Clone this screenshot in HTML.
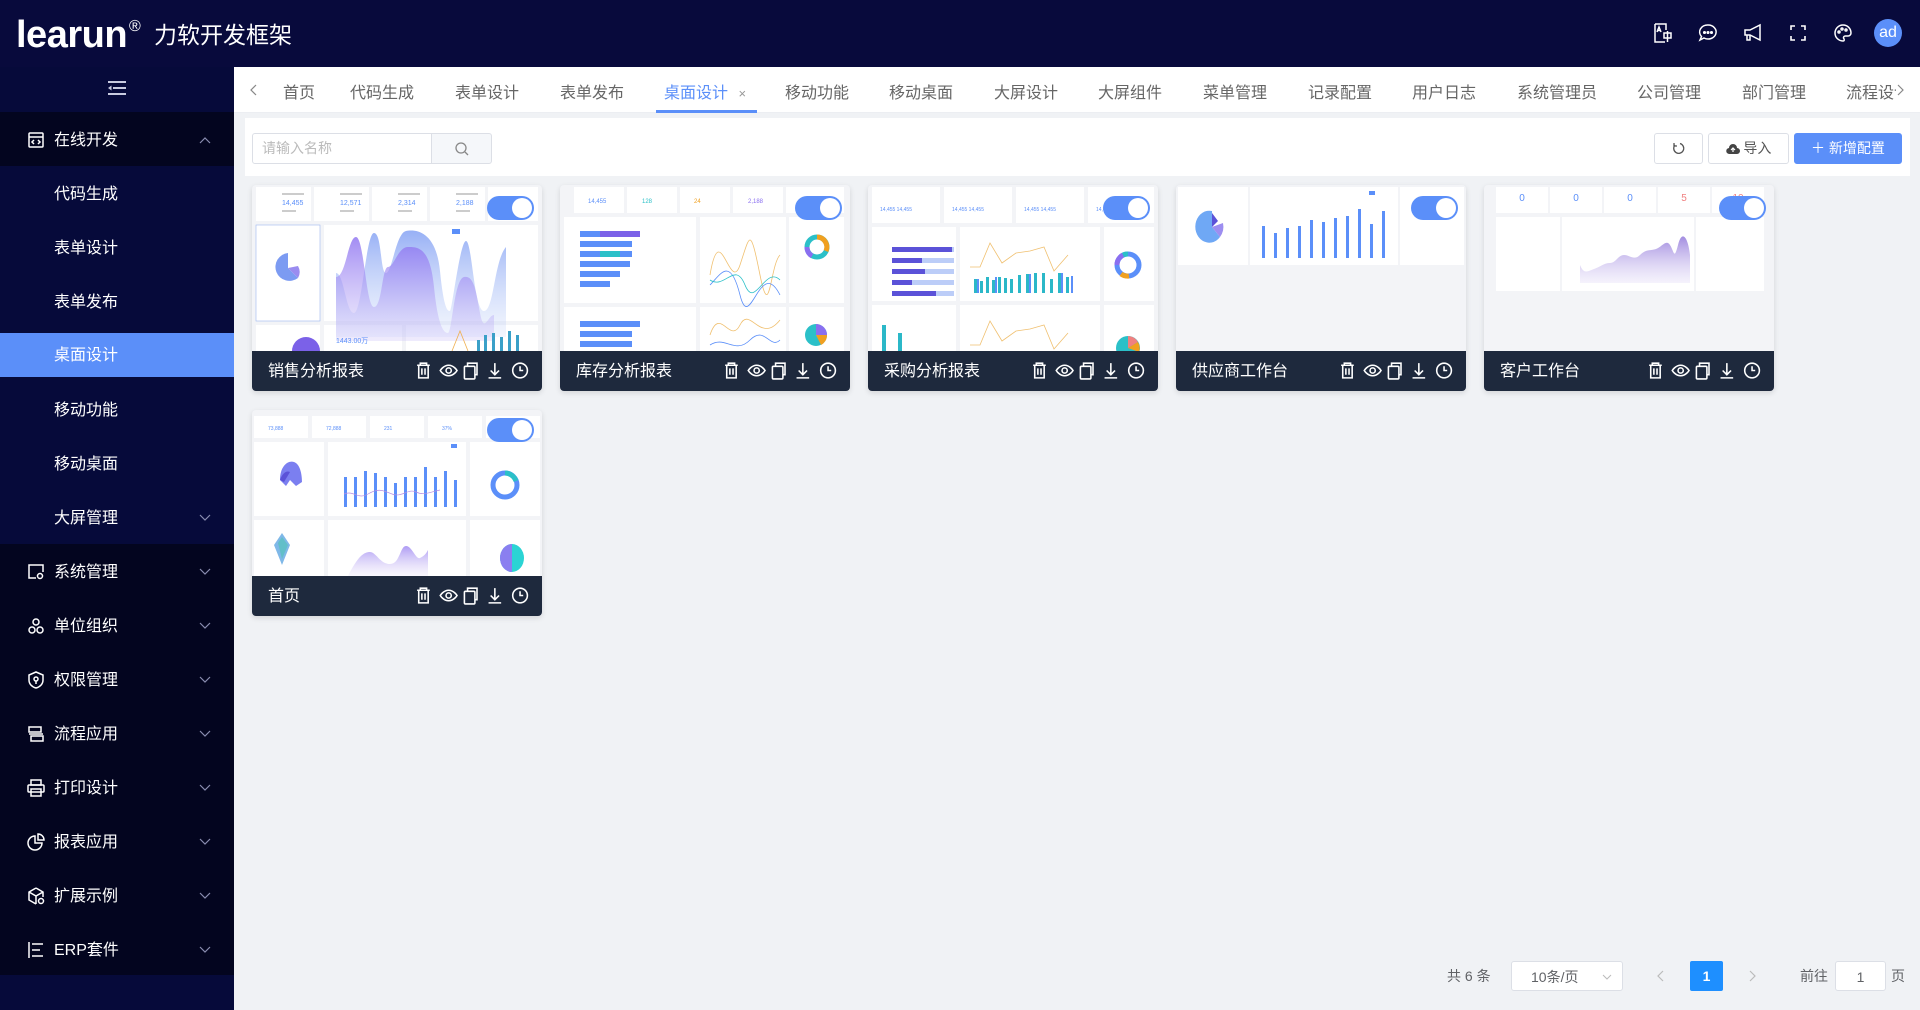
<!DOCTYPE html>
<html><head><meta charset="utf-8">
<style>
*{box-sizing:border-box;margin:0;padding:0}
body{width:1920px;height:1010px;overflow:hidden;background:#f0f2f5;font-family:"Liberation Sans","Noto Sans CJK SC",sans-serif;position:relative}
.hdr{position:absolute;left:0;top:0;width:1920px;height:67px;background:#080a3c}
.logo{position:absolute;left:16px;top:14px;color:#fff;font-weight:bold;font-size:38px;letter-spacing:-0.5px}
.logo sup{font-size:16px;font-weight:normal;vertical-align:top;position:relative;top:4px;margin-left:2px}
.logo2{position:absolute;left:154px;top:16px;color:#fff;font-size:23px}
.hi{position:absolute;top:22px;width:22px;height:22px}
.av{position:absolute;left:1874px;top:19px;width:28px;height:28px;border-radius:50%;background:#5b8ff9;color:#fff;font-size:16px;text-align:center;line-height:28px}
.side{position:absolute;left:0;top:67px;width:234px;height:943px;background:#060a3a}
.ham{position:absolute;left:108px;top:14px}
.m{position:absolute;left:0;width:234px;height:54px;color:#fff;font-size:16px;line-height:58px}
.m.p{background:#03051f;padding-left:54px}
.m.s{padding-left:54px}
.m .ic{position:absolute;left:27px;top:19px;width:18px;height:18px}
.m .ch{position:absolute;left:199px;top:24px}
.act{background:linear-gradient(#060a3a 0,#060a3a 5px,#5b8ff9 5px,#5b8ff9 49px,#060a3a 49px)}
.tabs{position:absolute;left:234px;top:67px;width:1686px;height:46px;background:#fff;border-bottom:1px solid #eceef2}
.tab{position:absolute;top:12px;font-size:16px;color:#666;white-space:nowrap}
.panel{position:absolute;left:245px;top:118px;width:1665px;height:58px;background:#fff}
.inp{position:absolute;left:252px;top:133px;width:180px;height:31px;border:1px solid #dcdfe6;border-radius:3px 0 0 3px;color:#bbb;font-size:14px;line-height:29px;padding-left:9px;background:#fff}
.sbtn{position:absolute;left:431px;top:133px;width:61px;height:31px;border:1px solid #dcdfe6;border-radius:0 3px 3px 0;background:#f5f7fa}
.btn{position:absolute;top:133px;height:31px;border:1px solid #dcdfe6;border-radius:3px;background:#fff;font-size:14px;color:#555;text-align:center;line-height:29px}
.card{position:absolute;width:290px;height:206px;border-radius:4px;overflow:hidden;background:#f3f4f7;box-shadow:0 2px 6px rgba(0,0,0,.12)}
.card svg.pv{position:absolute;left:0;top:0}
.ft{position:absolute;left:0;top:166px;width:290px;height:40px;background:#1e293d;color:#fff;font-size:16px;line-height:42px;padding-left:16px}
.ft .icons{position:absolute;left:162px;top:10px;width:126px;height:19px}
.tg{position:absolute;left:235px;top:11px;width:47px;height:24px;border-radius:12px;background:#5b8ff9}
.tg:after{content:"";position:absolute;right:2px;top:2px;width:20px;height:20px;border-radius:50%;background:#fff}
.pg{position:absolute;top:961px;height:30px;font-size:14px;color:#606266;line-height:30px}
</style></head><body>
<div class="hdr">
 <div class="logo">learun<sup>®</sup></div>
 <div class="logo2">力软开发框架</div>
 <svg class="hi" style="left:1652px" viewBox="0 0 22 22" fill="none" stroke="#fff" stroke-width="1.5"><path d="M3 2h11v6M3 2v18h10"/><path d="M5 10l2-5 2 5M5.5 8.5h3"/><rect x="12" y="11" width="7" height="5"/><path d="M15.5 9v11"/></svg>
 <svg class="hi" style="left:1697px" viewBox="0 0 22 22" fill="none" stroke="#fff" stroke-width="1.5"><path d="M11 3a8 7 0 1 1-4 13l-4 2 1.5-3.5A8 7 0 0 1 11 3z"/><circle cx="7.5" cy="10.5" r=".8" fill="#fff"/><circle cx="11" cy="10.5" r=".8" fill="#fff"/><circle cx="14.5" cy="10.5" r=".8" fill="#fff"/></svg>
 <svg class="hi" style="left:1742px" viewBox="0 0 22 22" fill="none" stroke="#fff" stroke-width="1.5"><path d="M3 8h5l10-5v15L8 13H3z"/><path d="M5 13v5h3v-5"/></svg>
 <svg class="hi" style="left:1787px" viewBox="0 0 22 22" fill="none" stroke="#fff" stroke-width="1.6"><path d="M4 8V4h4M14 4h4v4M18 14v4h-4M8 18H4v-4"/></svg>
 <svg class="hi" style="left:1832px" viewBox="0 0 22 22" fill="none" stroke="#fff" stroke-width="1.5"><path d="M11 3a8 8 0 1 0 0 16c1.5 0 1.5-1.5.8-2.5-.8-1 0-2.5 1.5-2.5H16a3 3 0 0 0 3-3c0-4.5-3.6-8-8-8z"/><circle cx="7" cy="10" r="1"/><circle cx="10" cy="7" r="1"/><circle cx="14" cy="8" r="1"/></svg>
 <div class="av">ad</div>
</div>

<div class="side">
 <svg class="ham" width="18" height="14" viewBox="0 0 18 14" fill="#c8cbe0"><rect x="0" y="0" width="18" height="2"/><rect x="5" y="6" width="13" height="2"/><rect x="0" y="12" width="18" height="2"/><path d="M0 7l3.5-2.5v5z"/></svg>
</div>
<div class="m p" style="top:112px"><svg class="ic" viewBox="0 0 18 18" fill="none" stroke="#fff" stroke-width="1.5"><rect x="2" y="2" width="14" height="14" rx="1"/><path d="M2 6h14M7 9l-2 2 2 2M11 9l2 2-2 2"/></svg>在线开发<svg class="ch" width="12" height="8" viewBox="0 0 12 8" fill="none" stroke="#8a8db0" stroke-width="1.2"><path d="M1 7l5-5 5 5"/></svg></div>
<div class="m s" style="top:166px">代码生成</div>
<div class="m s" style="top:220px">表单设计</div>
<div class="m s" style="top:274px">表单发布</div>
<div class="m s act" style="top:328px;line-height:56px">桌面设计</div>
<div class="m s" style="top:382px">移动功能</div>
<div class="m s" style="top:436px">移动桌面</div>
<div class="m s" style="top:490px">大屏管理<svg class="ch" width="12" height="8" viewBox="0 0 12 8" fill="none" stroke="#8a8db0" stroke-width="1.2"><path d="M1 1l5 5 5-5"/></svg></div>
<div class="m p" style="top:544px"><svg class="ic" viewBox="0 0 18 18" fill="none" stroke="#fff" stroke-width="1.5"><path d="M9 15H2V2h14v7"/><circle cx="13" cy="13" r="2.5"/></svg>系统管理<svg class="ch" width="12" height="8" viewBox="0 0 12 8" fill="none" stroke="#8a8db0" stroke-width="1.2"><path d="M1 1l5 5 5-5"/></svg></div>
<div class="m p" style="top:598px"><svg class="ic" viewBox="0 0 18 18" fill="none" stroke="#fff" stroke-width="1.5"><circle cx="9" cy="5" r="3"/><circle cx="5" cy="13" r="3"/><circle cx="13" cy="13" r="3"/></svg>单位组织<svg class="ch" width="12" height="8" viewBox="0 0 12 8" fill="none" stroke="#8a8db0" stroke-width="1.2"><path d="M1 1l5 5 5-5"/></svg></div>
<div class="m p" style="top:652px"><svg class="ic" viewBox="0 0 18 18" fill="none" stroke="#fff" stroke-width="1.5"><path d="M9 1l7 3v5c0 4-3 7-7 8-4-1-7-4-7-8V4z"/><circle cx="9" cy="8" r="2"/><path d="M9 10v3"/></svg>权限管理<svg class="ch" width="12" height="8" viewBox="0 0 12 8" fill="none" stroke="#8a8db0" stroke-width="1.2"><path d="M1 1l5 5 5-5"/></svg></div>
<div class="m p" style="top:706px"><svg class="ic" viewBox="0 0 18 18" fill="none" stroke="#fff" stroke-width="1.5"><rect x="2" y="2" width="12" height="5"/><rect x="4" y="11" width="12" height="5"/><path d="M2 9h14"/></svg>流程应用<svg class="ch" width="12" height="8" viewBox="0 0 12 8" fill="none" stroke="#8a8db0" stroke-width="1.2"><path d="M1 1l5 5 5-5"/></svg></div>
<div class="m p" style="top:760px"><svg class="ic" viewBox="0 0 18 18" fill="none" stroke="#fff" stroke-width="1.5"><rect x="4" y="1" width="10" height="5"/><rect x="1" y="6" width="16" height="7" rx="1"/><rect x="4" y="10" width="10" height="7"/></svg>打印设计<svg class="ch" width="12" height="8" viewBox="0 0 12 8" fill="none" stroke="#8a8db0" stroke-width="1.2"><path d="M1 1l5 5 5-5"/></svg></div>
<div class="m p" style="top:814px"><svg class="ic" viewBox="0 0 18 18" fill="none" stroke="#fff" stroke-width="1.5"><path d="M8 3a7 7 0 1 0 7 7H8z"/><path d="M11 1a6 6 0 0 1 6 6h-6z"/></svg>报表应用<svg class="ch" width="12" height="8" viewBox="0 0 12 8" fill="none" stroke="#8a8db0" stroke-width="1.2"><path d="M1 1l5 5 5-5"/></svg></div>
<div class="m p" style="top:868px"><svg class="ic" viewBox="0 0 18 18" fill="none" stroke="#fff" stroke-width="1.5"><path d="M9 1l7 4v5M9 1L2 5v8l7 4M2 5l7 4 7-4M9 9v8"/><circle cx="14" cy="14" r="2.5"/></svg>扩展示例<svg class="ch" width="12" height="8" viewBox="0 0 12 8" fill="none" stroke="#8a8db0" stroke-width="1.2"><path d="M1 1l5 5 5-5"/></svg></div>
<div class="m p" style="top:922px;height:53px"><svg class="ic" viewBox="0 0 18 18" fill="none" stroke="#fff" stroke-width="1.5"><path d="M2 1v16M5 3h11M5 9h8M5 15h11"/></svg>ERP套件<svg class="ch" width="12" height="8" viewBox="0 0 12 8" fill="none" stroke="#8a8db0" stroke-width="1.2"><path d="M1 1l5 5 5-5"/></svg></div>

<div class="tabs">
 <svg style="position:absolute;left:16px;top:17px" width="8" height="12" viewBox="0 0 8 12" fill="none" stroke="#888" stroke-width="1.2"><path d="M6 1L1 6l5 5"/></svg>
 <span class="tab" style="left:49px">首页</span>
 <span class="tab" style="left:116px">代码生成</span>
 <span class="tab" style="left:221px">表单设计</span>
 <span class="tab" style="left:326px">表单发布</span>
 <span class="tab" style="left:430px;color:#5b8ff9">桌面设计 <span style="font-size:13px;color:#999;margin-left:6px">×</span></span>
 <div style="position:absolute;left:422px;top:43px;width:101px;height:3px;background:#5b8ff9"></div>
 <span class="tab" style="left:551px">移动功能</span>
 <span class="tab" style="left:655px">移动桌面</span>
 <span class="tab" style="left:760px">大屏设计</span>
 <span class="tab" style="left:864px">大屏组件</span>
 <span class="tab" style="left:969px">菜单管理</span>
 <span class="tab" style="left:1074px">记录配置</span>
 <span class="tab" style="left:1178px">用户日志</span>
 <span class="tab" style="left:1283px">系统管理员</span>
 <span class="tab" style="left:1403px">公司管理</span>
 <span class="tab" style="left:1508px">部门管理</span>
 <span class="tab" style="left:1612px;width:50px;overflow:hidden">流程设计</span>
 <svg style="position:absolute;left:1662px;top:17px" width="8" height="12" viewBox="0 0 8 12" fill="none" stroke="#888" stroke-width="1.2"><path d="M2 1l5 5-5 5"/></svg>
</div>

<div class="panel"></div>
<div class="inp">请输入名称</div>
<div class="sbtn"><svg style="position:absolute;left:23px;top:8px" width="14" height="14" viewBox="0 0 14 14" fill="none" stroke="#888" stroke-width="1.3"><circle cx="6" cy="6" r="5"/><path d="M10 10l3 3"/></svg></div>
<div class="btn" style="left:1654px;width:49px"><svg style="margin-top:8px" width="13" height="13" viewBox="0 0 13 13" fill="none" stroke="#555" stroke-width="1.3"><path d="M3 3a5 5 0 1 0 5-1.5"/><path d="M2 1v3h3"/></svg></div>
<div class="btn" style="left:1708px;width:81px"><svg style="vertical-align:-2px" width="14" height="12" viewBox="0 0 14 12"><path d="M3.5 11a3 3 0 0 1-.5-6 4 4 0 0 1 8 0 3 3 0 0 1 0 6z" fill="#444"/><path d="M7 9V5M5 7l2-2 2 2" stroke="#fff" stroke-width="1.2" fill="none"/></svg> 导入</div>
<div class="btn" style="left:1794px;width:108px;background:#5b8ff9;border-color:#5b8ff9;color:#fff">＋ 新增配置</div>

<!-- Cards -->
<div class="card" style="left:252px;top:185px">
<svg class="pv" width="290" height="166" viewBox="0 0 290 166">
<g fill="#fff"><rect x="4" y="2" width="55" height="34"/><rect x="62" y="2" width="55" height="34"/><rect x="120" y="2" width="55" height="34"/><rect x="178" y="2" width="55" height="34"/><rect x="236" y="2" width="50" height="34"/><rect x="4" y="40" width="64" height="96" stroke="#9db6f0" stroke-width=".6"/><rect x="72" y="40" width="214" height="96"/><rect x="4" y="140" width="64" height="30"/><rect x="72" y="140" width="78" height="30"/><rect x="154" y="140" width="132" height="30"/></g>
<g fill="#5b8ff9" font-size="7" font-family="Liberation Sans"><text x="30" y="20">14,455</text><text x="88" y="20">12,571</text><text x="146" y="20">2,314</text><text x="204" y="20">2,188</text></g>
<g fill="#ccc"><rect x="30" y="8" width="22" height="2"/><rect x="88" y="8" width="22" height="2"/><rect x="146" y="8" width="22" height="2"/><rect x="204" y="8" width="22" height="2"/><rect x="30" y="25" width="14" height="2"/><rect x="88" y="25" width="14" height="2"/><rect x="146" y="25" width="14" height="2"/><rect x="204" y="25" width="14" height="2"/></g>
<path d="M36 68a14 14 0 1 0 10 25l-10-10z" fill="#7c9bf2"/><path d="M36 83l10 10a12 12 0 0 0 0-12z" fill="#9a8cf0"/>
<defs><linearGradient id="g1" x1="0" y1="0" x2="0" y2="1"><stop offset="0" stop-color="#8b6ff0" stop-opacity=".8"/><stop offset="1" stop-color="#c8bdf7" stop-opacity=".3"/></linearGradient><linearGradient id="g2" x1="0" y1="0" x2="0" y2="1"><stop offset="0" stop-color="#7d9cf3" stop-opacity=".8"/><stop offset="1" stop-color="#bfd0f8" stop-opacity=".2"/></linearGradient></defs>
<path d="M84 88c8 0 10 40 18 40s12-80 20-80 6 40 12 40 10-40 20-42 30 0 34 40 8 40 10 40 10-70 16-70 8 70 18 70 10-50 22-64v90H84z" fill="url(#g2)"/>
<path d="M84 92c10 0 12-40 20-40s10 70 18 70 8-40 14-40 10-20 20-20 22 0 26 40 10 46 14 46 6-54 16-56 12 14 16 36 8 2 14 2v26H84z" fill="url(#g1)"/>
<rect x="200" y="44" width="8" height="5" fill="#5b8ff9"/>
<path d="M40 166a14 14 0 0 1 28 0z" fill="#7b61e8"/>
<text x="84" y="158" font-size="7" fill="#5b8ff9" font-family="Liberation Sans">1443.00万</text>
<g fill="#3aa0c8"><rect x="225" y="155" width="3" height="11"/><rect x="232" y="150" width="3" height="16"/><rect x="240" y="148" width="3" height="18"/><rect x="248" y="152" width="3" height="14"/><rect x="256" y="146" width="3" height="20"/><rect x="264" y="150" width="3" height="16"/></g>
<path d="M200 166l8-20 8 20" stroke="#f0b050" fill="none" stroke-width=".8"/>
</svg>
<div class="tg"></div>
<div class="ft">销售分析报表<svg class="icons" viewBox="0 0 120 18" fill="none" stroke="#fff" stroke-width="1.5"><path d="M3 4h12M6 4V2h6v2M4.5 4v12h9V4M7.5 7v6M10.5 7v6"/><path d="M25 9s3-5 8-5 8 5 8 5-3 5-8 5-8-5-8-5z"/><circle cx="33" cy="9" r="2.5"/><rect x="48" y="5" width="10" height="12" rx="1"/><path d="M51 5V2h9v11h-2"/><path d="M77 2v11M73 9l4 4 4-4M71 16h12"/><circle cx="101" cy="9" r="7"/><path d="M101 5v4h3"/></svg></div>
</div>

<div class="card" style="left:560px;top:185px">
<svg class="pv" width="290" height="166" viewBox="0 0 290 166">
<g fill="#fff"><rect x="14" y="2" width="50" height="26"/><rect x="67" y="2" width="50" height="26"/><rect x="120" y="2" width="50" height="26"/><rect x="173" y="2" width="50" height="26"/><rect x="226" y="2" width="58" height="26"/><rect x="4" y="32" width="132" height="86"/><rect x="140" y="32" width="86" height="86"/><rect x="229" y="32" width="55" height="86"/><rect x="4" y="122" width="132" height="50"/><rect x="140" y="122" width="86" height="50"/><rect x="229" y="122" width="55" height="50"/></g>
<g font-size="6" font-family="Liberation Sans"><text x="28" y="18" fill="#5b8ff9">14,455</text><text x="82" y="18" fill="#2bc0c8">128</text><text x="134" y="18" fill="#f0a020">24</text><text x="188" y="18" fill="#8a6ff0">2,188</text></g>
<g><rect x="20" y="46" width="60" height="6" fill="#5b8ff9"/><rect x="40" y="46" width="40" height="6" fill="#7b61e8"/><rect x="20" y="56" width="52" height="6" fill="#5b8ff9"/><rect x="20" y="66" width="52" height="6" fill="#5b8ff9"/><rect x="40" y="66" width="20" height="6" fill="#2bc0c8"/><rect x="20" y="76" width="50" height="6" fill="#5b8ff9"/><rect x="20" y="86" width="40" height="6" fill="#5b8ff9"/><rect x="20" y="96" width="30" height="6" fill="#5b8ff9"/><rect x="20" y="136" width="60" height="6" fill="#5b8ff9"/><rect x="20" y="146" width="52" height="6" fill="#5b8ff9"/><rect x="20" y="156" width="52" height="6" fill="#5b8ff9"/></g>
<g fill="none" stroke-width=".8"><path d="M150 90c10-60 20 20 30-10s10-40 20 10 10-10 20-20" stroke="#f0c070"/><path d="M150 100c10-10 20-30 30 10s20-40 40 0" stroke="#5b8ff9"/><path d="M150 95c15 10 25-20 35 5s20-20 35-5" stroke="#2bc0c8"/><path d="M150 150c10-30 20 10 30-10s20 20 40-5" stroke="#f0c070"/><path d="M150 160c15-10 25 10 40-5s20 10 30 0" stroke="#5b8ff9"/></g>
<circle cx="257" cy="62" r="10" fill="none" stroke="#2bc0c8" stroke-width="5"/><path d="M257 52a10 10 0 0 1 9 14" stroke="#f0a020" stroke-width="5" fill="none"/><path d="M247 62a10 10 0 0 0 5 9" stroke="#8a6ff0" stroke-width="5" fill="none"/>
<circle cx="256" cy="150" r="11" fill="#2bc0c8"/><path d="M256 150v-11a11 11 0 0 1 11 11z" fill="#8a6ff0"/><path d="M256 150h11a11 11 0 0 1-6 10z" fill="#f0a020"/>
</svg>
<div class="tg"></div>
<div class="ft">库存分析报表<svg class="icons" viewBox="0 0 120 18" fill="none" stroke="#fff" stroke-width="1.5"><path d="M3 4h12M6 4V2h6v2M4.5 4v12h9V4M7.5 7v6M10.5 7v6"/><path d="M25 9s3-5 8-5 8 5 8 5-3 5-8 5-8-5-8-5z"/><circle cx="33" cy="9" r="2.5"/><rect x="48" y="5" width="10" height="12" rx="1"/><path d="M51 5V2h9v11h-2"/><path d="M77 2v11M73 9l4 4 4-4M71 16h12"/><circle cx="101" cy="9" r="7"/><path d="M101 5v4h3"/></svg></div>
</div>

<div class="card" style="left:868px;top:185px">
<svg class="pv" width="290" height="166" viewBox="0 0 290 166">
<g fill="#fff"><rect x="4" y="2" width="68" height="36"/><rect x="76" y="2" width="68" height="36"/><rect x="148" y="2" width="68" height="36"/><rect x="220" y="2" width="66" height="36"/><rect x="4" y="42" width="84" height="74"/><rect x="92" y="42" width="140" height="74"/><rect x="236" y="42" width="50" height="74"/><rect x="4" y="120" width="84" height="50"/><rect x="92" y="120" width="140" height="50"/><rect x="236" y="120" width="50" height="50"/></g>
<g font-size="5" fill="#5b8ff9" font-family="Liberation Sans"><text x="12" y="26">14,455 14,455</text><text x="84" y="26">14,455 14,455</text><text x="156" y="26">14,455 14,455</text><text x="228" y="26">14,455</text></g>
<g fill="#bccdf8"><rect x="24" y="62" width="62" height="5"/><rect x="24" y="73" width="62" height="5"/><rect x="24" y="84" width="62" height="5"/><rect x="24" y="95" width="62" height="5"/><rect x="24" y="106" width="62" height="5"/></g>
<g fill="#5b52d8"><rect x="24" y="62" width="60" height="5"/><rect x="24" y="73" width="30" height="5"/><rect x="24" y="84" width="33" height="5"/><rect x="24" y="95" width="20" height="5"/><rect x="24" y="106" width="44" height="5"/></g>
<g fill="#2bb8c8"><rect x="106" y="94" width="3" height="14"/><rect x="112" y="96" width="3" height="12"/><rect x="118" y="92" width="3" height="16"/><rect x="124" y="95" width="3" height="13"/><rect x="130" y="92" width="3" height="16"/><rect x="136" y="93" width="3" height="15"/><rect x="142" y="94" width="3" height="14"/><rect x="150" y="90" width="3" height="18"/><rect x="158" y="89" width="3" height="19"/><rect x="166" y="88" width="3" height="20"/><rect x="174" y="88" width="3" height="20"/><rect x="182" y="94" width="3" height="14"/><rect x="190" y="88" width="3" height="20"/><rect x="198" y="92" width="3" height="16"/><rect x="14" y="140" width="4" height="30"/><rect x="30" y="148" width="4" height="22"/></g>
<g fill="#5b8ff9"><rect x="109" y="94" width="2" height="14"/><rect x="127" y="92" width="2" height="16"/><rect x="161" y="89" width="2" height="19"/><rect x="193" y="88" width="2" height="20"/><rect x="203" y="91" width="2" height="17"/></g>
<path d="M102 82h10l10-24 12 20 14-10 14-2 14-4 10 24 14-16" fill="none" stroke="#f0c070" stroke-width=".8"/>
<path d="M102 160h10l10-24 12 20 14-10 14-2 14-4 10 24 14-16" fill="none" stroke="#f0c070" stroke-width=".8"/>
<circle cx="260" cy="80" r="11" fill="none" stroke="#5b8ff9" stroke-width="5"/><path d="M249 80a11 11 0 0 1 6-10" stroke="#8a6ff0" stroke-width="5" fill="none"/><path d="M253 89a11 11 0 0 0 8 2" stroke="#f0a020" stroke-width="5" fill="none"/><path d="M255 70a11 11 0 0 1 5-1" stroke="#2bc0c8" stroke-width="5" fill="none"/>
<circle cx="260" cy="163" r="12" fill="#2bc0c8"/><path d="M260 163v-12a12 12 0 0 1 10 6z" fill="#f08080"/><path d="M260 163l10-6a12 12 0 0 1 1 10z" fill="#f0a020"/>
</svg>
<div class="tg"></div>
<div class="ft">采购分析报表<svg class="icons" viewBox="0 0 120 18" fill="none" stroke="#fff" stroke-width="1.5"><path d="M3 4h12M6 4V2h6v2M4.5 4v12h9V4M7.5 7v6M10.5 7v6"/><path d="M25 9s3-5 8-5 8 5 8 5-3 5-8 5-8-5-8-5z"/><circle cx="33" cy="9" r="2.5"/><rect x="48" y="5" width="10" height="12" rx="1"/><path d="M51 5V2h9v11h-2"/><path d="M77 2v11M73 9l4 4 4-4M71 16h12"/><circle cx="101" cy="9" r="7"/><path d="M101 5v4h3"/></svg></div>
</div>

<div class="card" style="left:1176px;top:185px">
<svg class="pv" width="290" height="166" viewBox="0 0 290 166">
<g fill="#fff"><rect x="2" y="2" width="70" height="78"/><rect x="74" y="2" width="148" height="78"/><rect x="224" y="2" width="64" height="78"/></g>
<path d="M36 26a14 16 0 1 0 8 26l-8-10z" fill="#6fa8f5"/><path d="M36 42l8 10a14 16 0 0 0 3-14z" fill="#9d8ef0"/><path d="M36 42v-14l6 8z" fill="#5b52d8"/>
<g fill="#5b8ff9"><rect x="86" y="41" width="3" height="32"/><rect x="98" y="48" width="3" height="25"/><rect x="110" y="43" width="3" height="30"/><rect x="122" y="41" width="3" height="32"/><rect x="134" y="35" width="3" height="38"/><rect x="146" y="37" width="3" height="36"/><rect x="158" y="33" width="3" height="40"/><rect x="170" y="31" width="3" height="42"/><rect x="182" y="24" width="3" height="49"/><rect x="194" y="39" width="3" height="34"/><rect x="206" y="26" width="3" height="47"/></g>
<rect x="193" y="6" width="6" height="4" fill="#5b8ff9"/>
</svg>
<div class="tg"></div>
<div class="ft">供应商工作台<svg class="icons" viewBox="0 0 120 18" fill="none" stroke="#fff" stroke-width="1.5"><path d="M3 4h12M6 4V2h6v2M4.5 4v12h9V4M7.5 7v6M10.5 7v6"/><path d="M25 9s3-5 8-5 8 5 8 5-3 5-8 5-8-5-8-5z"/><circle cx="33" cy="9" r="2.5"/><rect x="48" y="5" width="10" height="12" rx="1"/><path d="M51 5V2h9v11h-2"/><path d="M77 2v11M73 9l4 4 4-4M71 16h12"/><circle cx="101" cy="9" r="7"/><path d="M101 5v4h3"/></svg></div>
</div>

<div class="card" style="left:1484px;top:185px">
<svg class="pv" width="290" height="166" viewBox="0 0 290 166">
<g fill="#fff"><rect x="12" y="2" width="52" height="26"/><rect x="66" y="2" width="52" height="26"/><rect x="120" y="2" width="52" height="26"/><rect x="174" y="2" width="52" height="26"/><rect x="228" y="2" width="52" height="26"/><rect x="12" y="32" width="64" height="74"/><rect x="78" y="32" width="132" height="74"/><rect x="212" y="32" width="68" height="74"/></g>
<g font-size="10" font-family="Liberation Sans" text-anchor="middle"><text x="38" y="16" fill="#5b8ff9">0</text><text x="92" y="16" fill="#5b8ff9">0</text><text x="146" y="16" fill="#5b8ff9">0</text><text x="200" y="16" fill="#f08080">5</text><text x="254" y="16" fill="#f08080">10</text></g>
<defs><linearGradient id="g3" x1="0" y1="0" x2="0" y2="1"><stop offset="0" stop-color="#8b70d8" stop-opacity=".8"/><stop offset="1" stop-color="#ddd4f5" stop-opacity=".3"/></linearGradient></defs>
<path d="M96 80c4 10 8 6 14 4s10-6 16-6 8-8 14-8 10 6 16 0 10-4 16-6 10-10 14-4 4 16 8 0 10-8 12 10v28H96z" fill="url(#g3)"/>
</svg>
<div class="tg"></div>
<div class="ft">客户工作台<svg class="icons" viewBox="0 0 120 18" fill="none" stroke="#fff" stroke-width="1.5"><path d="M3 4h12M6 4V2h6v2M4.5 4v12h9V4M7.5 7v6M10.5 7v6"/><path d="M25 9s3-5 8-5 8 5 8 5-3 5-8 5-8-5-8-5z"/><circle cx="33" cy="9" r="2.5"/><rect x="48" y="5" width="10" height="12" rx="1"/><path d="M51 5V2h9v11h-2"/><path d="M77 2v11M73 9l4 4 4-4M71 16h12"/><circle cx="101" cy="9" r="7"/><path d="M101 5v4h3"/></svg></div>
</div>

<div class="card" style="left:252px;top:410px">
<svg class="pv" width="290" height="166" viewBox="0 0 290 166">
<g fill="#fff"><rect x="2" y="6" width="54" height="22"/><rect x="60" y="6" width="54" height="22"/><rect x="118" y="6" width="54" height="22"/><rect x="176" y="6" width="54" height="22"/><rect x="234" y="6" width="54" height="22"/><rect x="2" y="32" width="70" height="74"/><rect x="76" y="32" width="138" height="74"/><rect x="218" y="32" width="70" height="74"/><rect x="2" y="110" width="70" height="60"/><rect x="76" y="110" width="138" height="60"/><rect x="218" y="110" width="70" height="60"/></g>
<g font-size="5" fill="#5b8ff9" font-family="Liberation Sans"><text x="16" y="20">73,888</text><text x="74" y="20">72,888</text><text x="132" y="20">231</text><text x="190" y="20">37%</text></g>
<path d="M28 70c0-14 8-20 14-18s8 12 8 20l-6 4-6-6-4 6z" fill="#7b7ff0"/><path d="M28 70c2-6 6-10 10-8l-6 10z" fill="#5b52d8"/>
<g fill="#5b8ff9"><rect x="92" y="67" width="3" height="30"/><rect x="102" y="67" width="3" height="30"/><rect x="112" y="61" width="3" height="36"/><rect x="122" y="63" width="3" height="34"/><rect x="132" y="67" width="3" height="30"/><rect x="142" y="73" width="3" height="24"/><rect x="152" y="67" width="3" height="30"/><rect x="162" y="67" width="3" height="30"/><rect x="172" y="57" width="3" height="40"/><rect x="182" y="67" width="3" height="30"/><rect x="192" y="61" width="3" height="36"/><rect x="202" y="70" width="3" height="27"/><rect x="199" y="34" width="6" height="4"/></g>
<path d="M92 84c10-4 14 6 24 0s14-4 24 0 16-6 24-2 14 0 24-2" fill="none" stroke="#b48ce0" stroke-width=".7"/>
<circle cx="253" cy="75" r="12" fill="none" stroke="#5b8ff9" stroke-width="5"/><path d="M253 63a12 12 0 0 1 11 8" stroke="#2bc0c8" stroke-width="5" fill="none"/>
<path d="M22 135l8-12 8 12-8 20z" fill="#7fb8e8"/><path d="M26 133l4-6 6 8-6 14z" fill="#5bc0c0" opacity=".8"/>
<defs><linearGradient id="g4" x1="0" y1="0" x2="0" y2="1"><stop offset="0" stop-color="#8b70f0" stop-opacity=".7"/><stop offset="1" stop-color="#ddd4f5" stop-opacity=".2"/></linearGradient></defs>
<path d="M96 166c10-20 16-24 22-24s10 12 20 12 10-18 16-18 10 14 14 12 6-4 8-8v26z" fill="url(#g4)"/>
<ellipse cx="260" cy="148" rx="12" ry="14" fill="#2bd4d4"/><path d="M260 134a12 14 0 0 0 0 28z" fill="#8a7ff0"/>
</svg>
<div class="tg" style="top:8px"></div>
<div class="ft">首页<svg class="icons" viewBox="0 0 120 18" fill="none" stroke="#fff" stroke-width="1.5"><path d="M3 4h12M6 4V2h6v2M4.5 4v12h9V4M7.5 7v6M10.5 7v6"/><path d="M25 9s3-5 8-5 8 5 8 5-3 5-8 5-8-5-8-5z"/><circle cx="33" cy="9" r="2.5"/><rect x="48" y="5" width="10" height="12" rx="1"/><path d="M51 5V2h9v11h-2"/><path d="M77 2v11M73 9l4 4 4-4M71 16h12"/><circle cx="101" cy="9" r="7"/><path d="M101 5v4h3"/></svg></div>
</div>

<!-- pagination -->
<div class="pg" style="left:1447px">共 6 条</div>
<div class="pg" style="left:1511px;width:112px;border:1px solid #dcdfe6;border-radius:3px;background:#fff;padding-left:19px">10条/页<svg style="position:absolute;left:90px;top:12px" width="10" height="6" viewBox="0 0 10 6" fill="none" stroke="#bbb"><path d="M1 1l4 4 4-4"/></svg></div>
<svg style="position:absolute;left:1657px;top:970px" width="8" height="12" viewBox="0 0 8 12" fill="none" stroke="#bbb" stroke-width="1.2"><path d="M6 1L1 6l5 5"/></svg>
<div class="pg" style="left:1690px;width:33px;background:#1e8fff;border-radius:2px;color:#fff;text-align:center;font-weight:bold">1</div>
<svg style="position:absolute;left:1748px;top:970px" width="8" height="12" viewBox="0 0 8 12" fill="none" stroke="#bbb" stroke-width="1.2"><path d="M2 1l5 5-5 5"/></svg>
<div class="pg" style="left:1800px">前往</div>
<div class="pg" style="left:1835px;width:51px;border:1px solid #dcdfe6;border-radius:3px;background:#fff;text-align:center">1</div>
<div class="pg" style="left:1891px">页</div>
</body></html>
